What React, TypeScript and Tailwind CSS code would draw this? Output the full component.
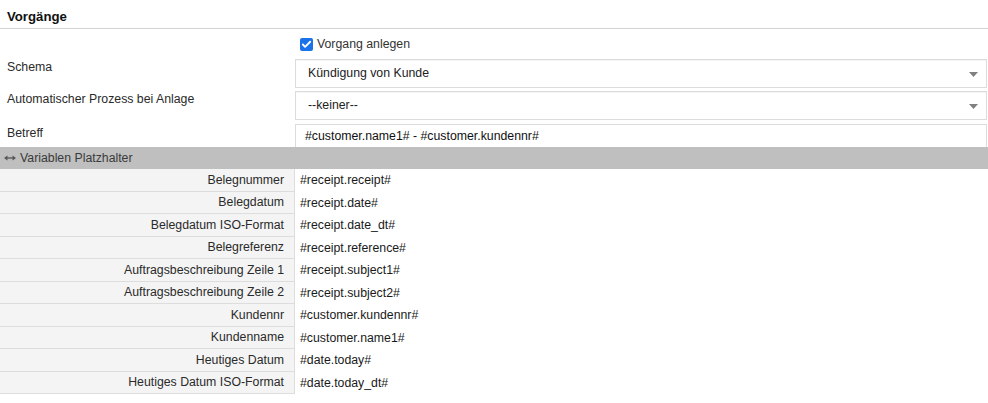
import { Check } from "lucide-react";

const placeholders: [string, string][] = [
  ["Belegnummer", "#receipt.receipt#"],
  ["Belegdatum", "#receipt.date#"],
  ["Belegdatum ISO-Format", "#receipt.date_dt#"],
  ["Belegreferenz", "#receipt.reference#"],
  ["Auftragsbeschreibung Zeile 1", "#receipt.subject1#"],
  ["Auftragsbeschreibung Zeile 2", "#receipt.subject2#"],
  ["Kundennr", "#customer.kundennr#"],
  ["Kundenname", "#customer.name1#"],
  ["Heutiges Datum", "#date.today#"],
  ["Heutiges Datum ISO-Format", "#date.today_dt#"],
];

function SelectBox({ value }: { value: string }) {
  return (
    <div className="flex h-[29px] items-center justify-between border border-[#dcdcdc] bg-white pl-[12px] pr-[7px] shadow-[inset_0_1px_1px_rgba(0,0,0,0.04)]">
      <span className="text-[12.3px] text-[#222]">{value}</span>
      <svg width="9" height="5" viewBox="0 0 9 5" className="mt-[1px] mr-[1px]">
        <path d="M0 0 H9 L4.5 5 Z" fill="#808080" />
      </svg>
    </div>
  );
}

export default function App() {
  return (
    <div className="w-[988px] bg-white font-['Liberation_Sans',Arial,sans-serif] text-[#2a2a2a]">
      <div className="flex h-[29px] items-center border-b border-[#d4d4d4] px-[7px] pt-[5px]">
        <h2 className="text-[13.2px] font-bold text-[#111]">Vorgänge</h2>
      </div>

      <div className="flex h-[30px] items-center pl-[300px]">
        <span className="flex h-[13px] w-[13px] items-center justify-center rounded-[2px] bg-[#1a73e8]">
          <Check className="h-[11px] w-[11px] text-white" strokeWidth={4} />
        </span>
        <span className="ml-[4px] text-[12.3px] text-[#333]">Vorgang anlegen</span>
      </div>

      <div className="grid grid-cols-[295px_692px] gap-y-[3px]">
        <div className="pt-[1px] pl-[7px] text-[12.3px] leading-[14px]">Schema</div>
        <SelectBox value="Kündigung von Kunde" />

        <div className="pt-[1px] pl-[7px] text-[12.3px] leading-[14px]">Automatischer Prozess bei Anlage</div>
        <div>
          <SelectBox value="--keiner--" />
        </div>

        <div className="mt-[1px] pt-[2px] pl-[7px] text-[12.3px] leading-[14px]">Betreff</div>
        <div className="mt-[1px] flex h-[23px] items-center border border-b-0 border-[#dcdcdc] pl-[9px] text-[12.3px] text-[#111]">
          #customer.name1# - #customer.kundennr#
        </div>
      </div>

      <div className="flex h-[22px] items-center gap-[4px] bg-[#bfbfbf] pl-[4px] text-[12.3px] text-[#3a3a3a]">
        <svg width="12" height="6" viewBox="0 0 12 6">
          <path d="M0 3 L3.5 0.5 V5.5 Z M12 3 L8.5 0.5 V5.5 Z" fill="#555" />
          <rect x="3" y="2.2" width="6" height="1.6" fill="#666" />
        </svg>
        <span>Variablen Platzhalter</span>
      </div>

      <div className="w-full">
        {placeholders.map(([label, value]) => (
          <div key={label} className="flex h-[22.5px]">
            <div className="flex w-[295px] items-center justify-end border-r border-b border-[#dddddd] bg-[#f4f4f4] pr-[10px] text-[12.3px] text-[#2a2a2a]">
              {label}
            </div>
            <div className="flex items-center pl-[5px] text-[12.3px] text-[#1a1a1a]">{value}</div>
          </div>
        ))}
      </div>
    </div>
  );
}
